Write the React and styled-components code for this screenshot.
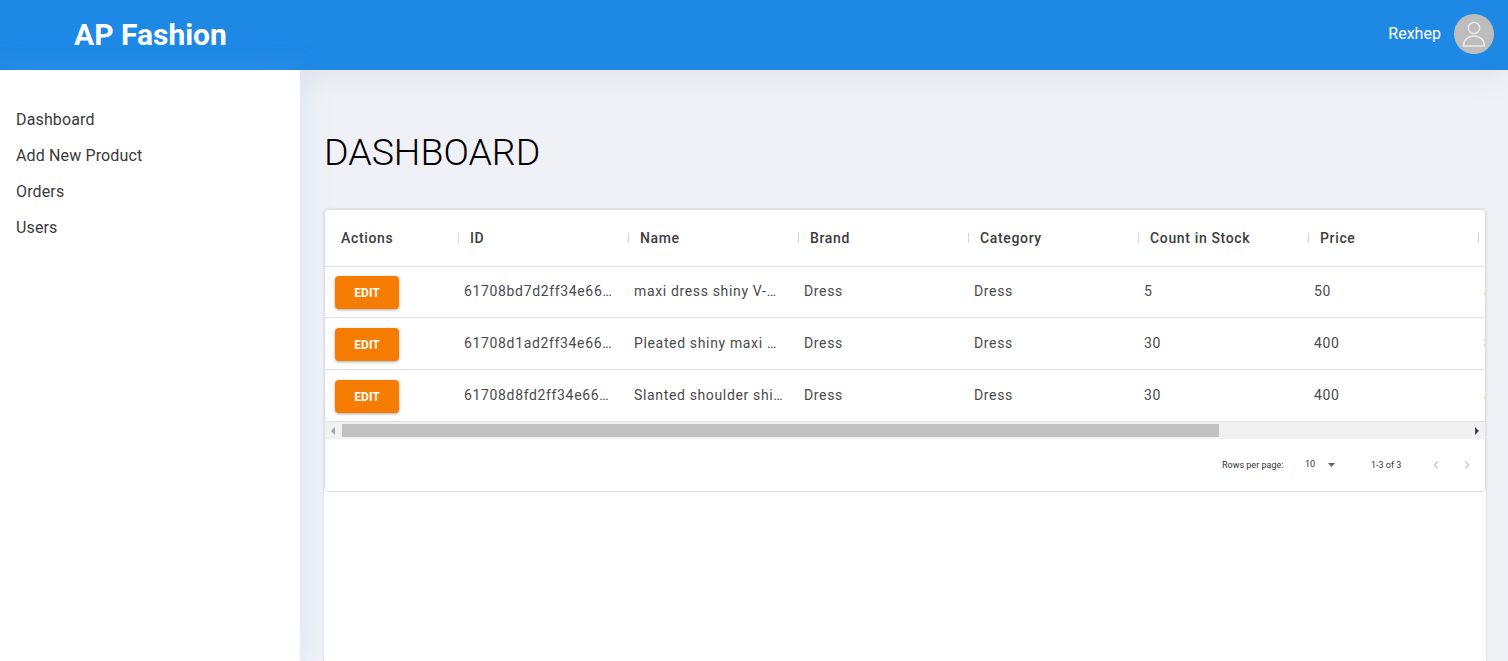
import React from 'react';
import styled, { createGlobalStyle } from 'styled-components';

const GlobalStyle = createGlobalStyle`
  html, body {
    margin: 0;
    height: 100%;
    overflow: hidden;
    font-family: Roboto, "Liberation Sans", sans-serif;
    background: #eff1f6;
  }
  * {
    box-sizing: border-box;
  }
`;

const Page = styled.div`
  display: flex;
  flex-direction: column;
  height: 100vh;
  overflow: hidden;
`;

const Header = styled.header`
  display: flex;
  align-items: center;
  justify-content: space-between;
  flex: 0 0 70px;
  padding: 0 14px 2px 74px;
  background: #1e88e5;
  color: #fff;
  position: relative;
  z-index: 2;
  box-shadow: 0 0 40px rgba(0, 0, 0, 0.08);
`;

const Logo = styled.h1`
  margin: 0;
  font-size: 30px;
  font-weight: 700;
`;

const UserBox = styled.div`
  display: flex;
  align-items: center;
  gap: 13px;
  font-size: 16px;
  line-height: 19px;
`;

const UserName = styled.span`
  margin-bottom: 2px;
  letter-spacing: 0.03px;
`;

const Avatar = styled.div`
  display: flex;
  width: 40px;
  height: 40px;
  border-radius: 50%;
  background: #bdbdbd;
`;

const Body = styled.div`
  display: flex;
  flex: 1;
  min-height: 0;
`;

const Sidebar = styled.nav`
  display: flex;
  flex-direction: column;
  flex: 0 0 300px;
  padding: 32px 16px 0;
  background: #fff;
  position: relative;
  z-index: 3;
  box-shadow: 0 0 30px rgba(120, 180, 246, 0.2);
`;

const NavItem = styled.a`
  height: 36px;
  line-height: 36px;
  font-size: 16px;
  letter-spacing: 0.14px;
  color: #3a3a3a;
`;

const Main = styled.main`
  display: flex;
  flex-direction: column;
  flex: 1;
  min-width: 0;
  padding: 0 22px 0 24px;
`;

const Title = styled.h2`
  margin: 0;
  flex: 0 0 139px;
  padding-top: 61px;
  font-size: 37.5px;
  line-height: 42px;
  font-weight: 300;
  color: #000;
`;

const Sheet = styled.section`
  flex: 1;
  background: #fff;
  border-radius: 4px 4px 0 0;
  position: relative;
  z-index: 4;
  box-shadow: 0 0 2px rgba(0, 0, 0, 0.2);
`;

const Grid = styled.div`
  height: 283px;
  border: 1px solid #e0e0e0;
  border-radius: 4px;
  overflow: hidden;
`;

const Clip = styled.div`
  overflow: hidden;
`;

const HeadRow = styled.div`
  display: flex;
  width: 1489px;
  height: 57px;
  margin-bottom: -1px;
  border-bottom: 1px solid #e0e0e0;
`;

const Row = styled.div`
  display: flex;
  width: 1489px;
  height: 52px;
  border-bottom: 1px solid #e0e0e0;
`;

const HeadCell = styled.div`
  position: relative;
  flex: 0 0 ${(p) => p.$w}px;
  padding-left: 16px;
  font-size: 14px;
  font-weight: 500;
  color: #3d3d3d;
  line-height: 56px;
  letter-spacing: 0.65px;

  &::after {
    content: '';
    position: absolute;
    right: -5px;
    top: 23px;
    width: 1px;
    height: 10px;
    background: #d6d6d6;
  }
`;

const Cell = styled.div`
  flex: 0 0 ${(p) => p.$w}px;
  padding: 0 10px;
  font-size: 14px;
  line-height: 50px;
  color: #4a4a4a;
  letter-spacing: 0.65px;
  white-space: nowrap;
  overflow: hidden;
  text-overflow: ellipsis;
`;

const EditButton = styled.button`
  display: block;
  width: 64px;
  height: 33px;
  margin-top: 10px;
  padding: 0;
  border: 0;
  border-radius: 4px;
  background: #f57c00;
  color: #fff;
  font-family: inherit;
  font-size: 12px;
  font-weight: 700;
  box-shadow: 0 1px 3px rgba(0, 0, 0, 0.35);
`;

const Scrollbar = styled.div`
  display: flex;
  align-items: center;
  height: 17px;
  background: #f1f1f1;
`;

const ScrollArrow = styled.div`
  display: flex;
  align-items: center;
  justify-content: center;
  flex: 0 0 17px;
  color: ${(p) => p.$color};
`;

const Track = styled.div`
  display: flex;
  flex: 1;
`;

const Thumb = styled.div`
  height: 13px;
  background: #c1c1c1;
`;

const Pager = styled.div`
  display: flex;
  align-items: center;
  height: 52px;
  padding-left: 897px;
  font-size: 9px;
  color: #333;
`;

const PagerLabel = styled.span`
  flex: 0 0 ${(p) => p.$w}px;
`;

const PageSize = styled.span`
  display: flex;
  align-items: center;
  flex: 0 0 66px;
`;

const SizeValue = styled.span`
  margin-bottom: 2px;
`;

const Caret = styled.svg`
  margin-left: 13px;
  width: 7px;
  height: 4px;
  fill: #666;
`;

const PageArrow = styled.svg`
  flex: 0 0 8px;
  height: 10px;
  margin-right: 23px;
  fill: none;
  stroke: #c4c4c4;
  stroke-width: 1.2;
`;

const widths = [129, 170, 170, 170, 170, 170, 170, 170];
const headers = ['Actions', 'ID', 'Name', 'Brand', 'Category', 'Count in Stock', 'Price', 'Description'];
const products = [
  ['61708bd7d2ff34e66a1c07f3', 'maxi dress shiny V-neck sleeveless', 'Dress', 'Dress', '5', '50', 'a dress'],
  ['61708d1ad2ff34e66a1c07f9', 'Pleated shiny maxi dress long', 'Dress', 'Dress', '30', '400', 'Shiny dress'],
  ['61708d8fd2ff34e66a1c0801', 'Slanted shoulder shiny dress', 'Dress', 'Dress', '30', '400', 'a dress'],
];
const navItems = ['Dashboard', 'Add New Product', 'Orders', 'Users'];

function App() {
  return (
    <Page>
      <GlobalStyle />
      <Header>
        <Logo>AP Fashion</Logo>
        <UserBox>
          <UserName>Rexhep</UserName>
          <Avatar>
            <svg width="40" height="40" viewBox="0 0 40 40" fill="none" stroke="#ececec" strokeWidth="1.4">
              <circle cx="20" cy="14" r="5.6" />
              <path d="M9.5 32c0-6 4.500-10 10.500-10s10.500 4 10.500 10z" />
            </svg>
          </Avatar>
        </UserBox>
      </Header>
      <Body>
        <Sidebar>
          {navItems.map((item) => (
            <NavItem key={item}>{item}</NavItem>
          ))}
        </Sidebar>
        <Main>
          <Title>DASHBOARD</Title>
          <Sheet>
            <Grid>
              <Clip>
                <HeadRow>
                  {headers.map((h, i) => (
                    <HeadCell key={h} $w={widths[i]}>{h}</HeadCell>
                  ))}
                </HeadRow>
                {products.map((p) => (
                  <Row key={p[0]}>
                    <Cell $w={widths[0]}>
                      <EditButton>EDIT</EditButton>
                    </Cell>
                    {p.map((v, i) => (
                      <Cell key={i} $w={widths[i + 1]}>{v}</Cell>
                    ))}
                  </Row>
                ))}
              </Clip>
              <Scrollbar>
                <ScrollArrow $color="#a3a3a3">
                  <svg width="5" height="8" viewBox="0 0 5 8" fill="currentColor"><path d="M4 0v8L0 4z" /></svg>
                </ScrollArrow>
                <Track>
                  <Thumb style={{ width: `${(1160 / 1489) * 100}%` }} />
                </Track>
                <ScrollArrow $color="#444">
                  <svg width="5" height="8" viewBox="0 0 5 8" fill="currentColor"><path d="M1 0v8l4-4z" /></svg>
                </ScrollArrow>
              </Scrollbar>
              <Pager>
                <PagerLabel $w={83}>Rows per page:</PagerLabel>
                <PageSize>
                  <SizeValue>10</SizeValue>
                  <Caret viewBox="0 0 7 4"><path d="M0 0h7L3.500 4z" /></Caret>
                </PageSize>
                <PagerLabel $w={61}>1-3 of 3</PagerLabel>
                <PageArrow viewBox="0 0 8 10"><path d="M5.500 1.500L2.500 5l3 3.500" /></PageArrow>
                <PageArrow viewBox="0 0 8 10"><path d="M2.500 1.500l3 3.500-3 3.500" /></PageArrow>
              </Pager>
            </Grid>
          </Sheet>
        </Main>
      </Body>
    </Page>
  );
}

export default App;
